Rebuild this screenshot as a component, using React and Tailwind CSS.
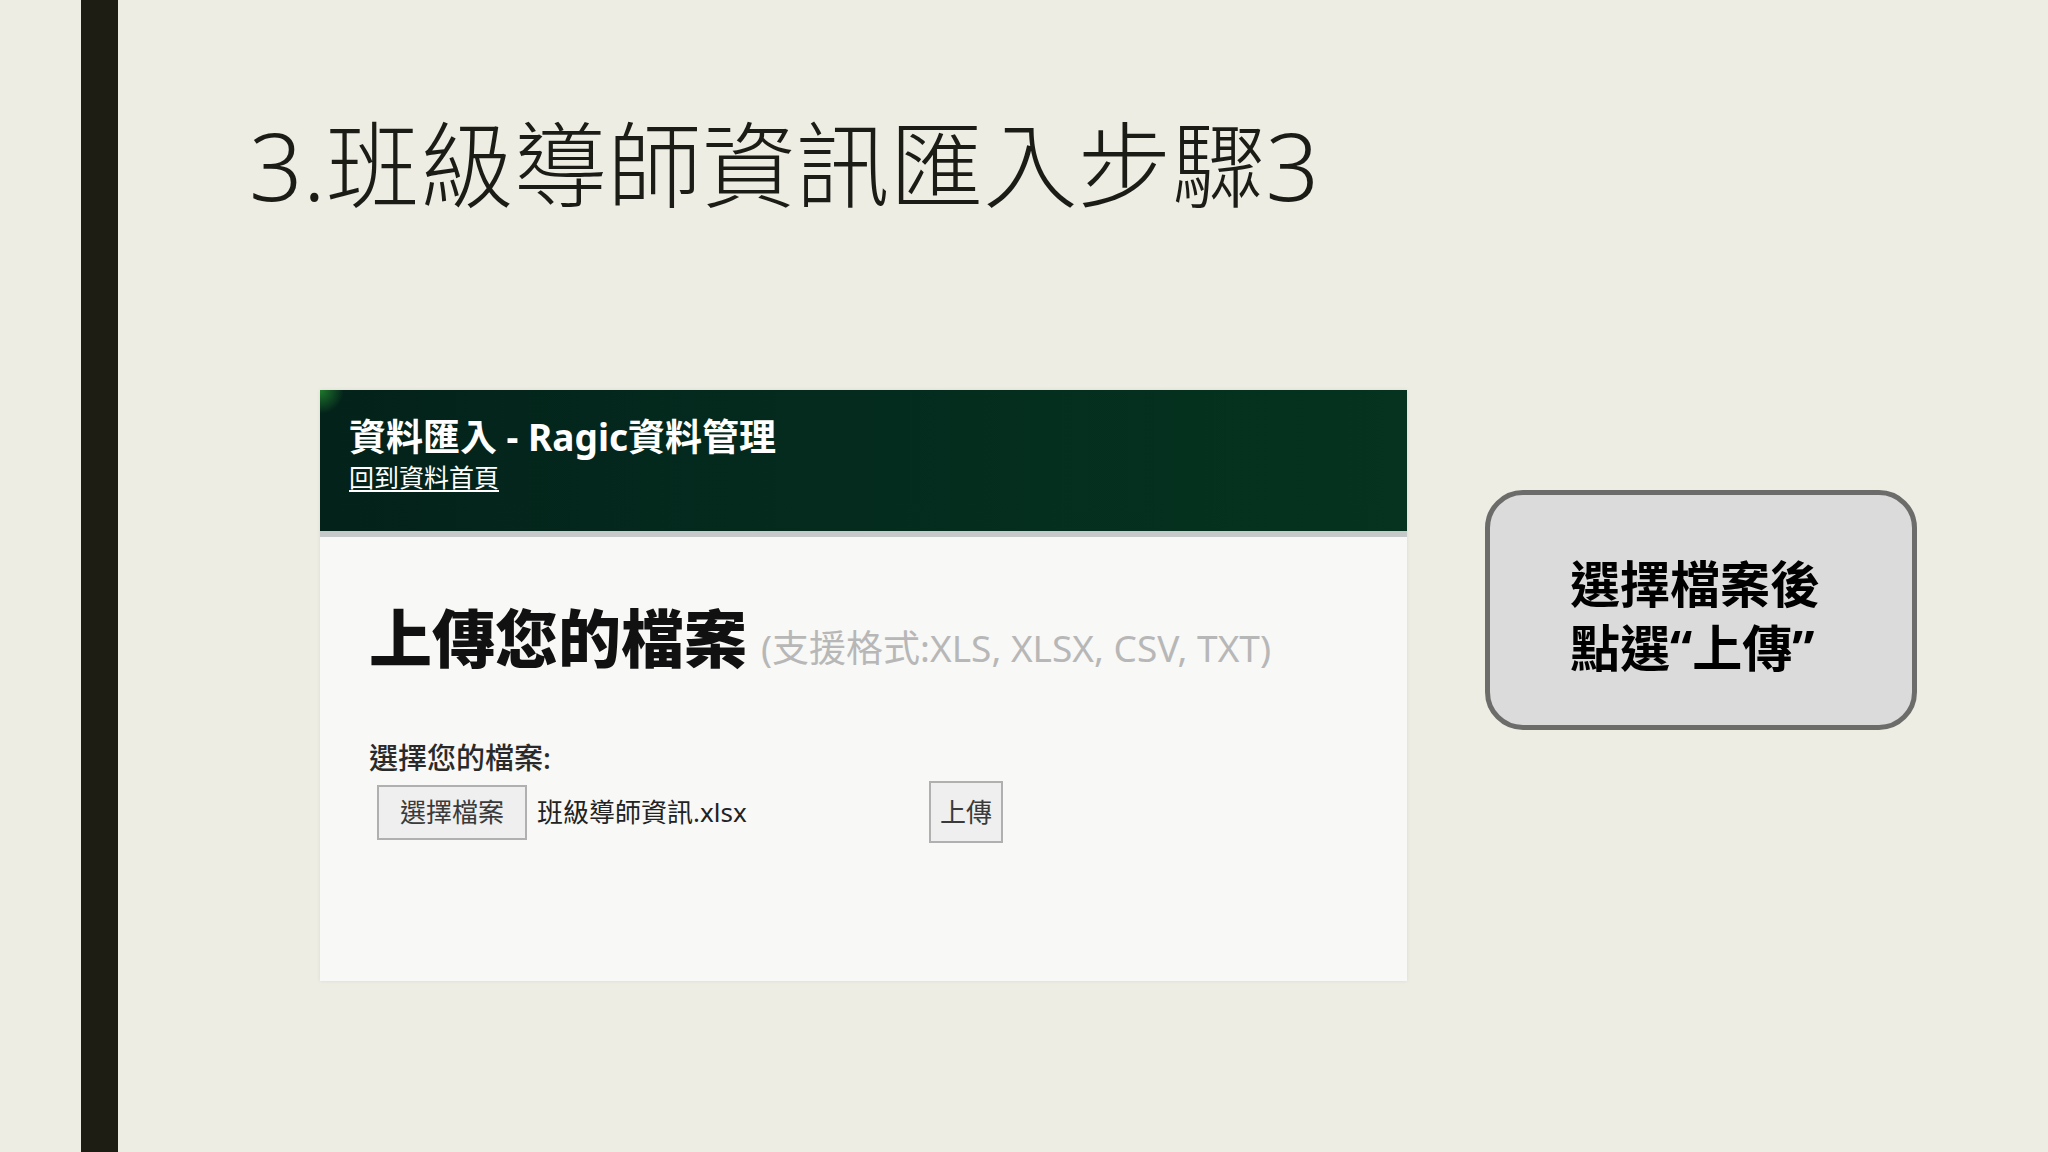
import React from "react";

const cjk = "font-['Noto_Sans','Noto_Sans_CJK_TC',sans-serif]";

function RagicPanel() {
    return (
        <div className="w-[1087px] h-[591px] flex flex-col shrink-0 bg-[#f8f8f6] shadow-[0_0_4px_rgba(0,0,0,0.08)]">
            <div className="h-[141px] pl-[29px] pt-[25px] bg-[radial-gradient(circle_at_0%_0%,#1f7a2c_0px,rgba(4,40,28,0)_24px),linear-gradient(90deg,#03221a_0%,#042b1e_45%,#05331f_100%)]">
                <div className={`${cjk} text-white text-[37px] font-bold leading-[44px]`}>
                    資料匯入 - Ragic資料管理
                </div>
                <div className={`${cjk} text-white text-[25px] leading-[30px] mt-[3px] underline underline-offset-[3px] decoration-[2px]`}>
                    回到資料首頁
                </div>
            </div>
            <div className="h-[6px] bg-[#c6c9c9]" />
            <div className="flex-1 pl-[49px] pt-[62px]">
                <div className="flex items-baseline">
                    <h2 className={`${cjk} text-[63px] leading-[77px] font-black text-[#111]`}>
                        上傳您的檔案
                    </h2>
                    <span className={`${cjk} ml-[14px] text-[37px] text-[#b7b7b7]`}>
                        (支援格式:XLS, XLSX, CSV, TXT)
                    </span>
                </div>
                <div className={`${cjk} mt-[64px] text-[29px] leading-[35px] font-medium text-[#2a2a2a]`}>
                    選擇您的檔案:
                </div>
                <div className="flex items-center mt-[6px] pl-[8px]">
                    <div className={`${cjk} w-[150px] h-[55px] flex items-center justify-center bg-[#efefef] border-2 border-[#b0b0b0] text-[26px] text-[#3a3a3a]`}>
                        選擇檔案
                    </div>
                    <div className={`${cjk} w-[402px] pl-[10px] text-[26px] text-[#222]`}>
                        班級導師資訊.xlsx
                    </div>
                    <div className={`${cjk} w-[74px] h-[62px] flex items-center justify-center bg-[#efefef] border-2 border-[#b0b0b0] text-[26px] text-[#3a3a3a]`}>
                        上傳
                    </div>
                </div>
            </div>
        </div>
    );
}

export default function App() {
    return (
        <div className="w-[2048px] h-[1152px] bg-[#eeede4] flex overflow-hidden">
            <div className="w-[81px] shrink-0" />
            <div className="w-[37px] shrink-0 bg-[#1e1d13]" />
            <div className="flex-1 flex flex-col">
                <h1 className={`${cjk} pl-[131px] pt-[110px] text-[94px] leading-[110px] font-light text-[#1c1c17]`}>
                    3.班級導師資訊匯入步驟3
                </h1>
                <div className="flex items-start pl-[202px] mt-[170px]">
                    <RagicPanel />
                    <div className="ml-[78px] mt-[100px] w-[432px] h-[240px] shrink-0 rounded-[38px] border-[5px] border-[#6c6c6a] bg-[#dcdbdb] flex items-center justify-center pr-[12px] pt-[12px]">
                        <p className={`${cjk} text-[50px] leading-[64px] font-bold text-black`}>
                            選擇檔案後
                            <br />
                            點選“上傳”
                        </p>
                    </div>
                </div>
            </div>
        </div>
    );
}
